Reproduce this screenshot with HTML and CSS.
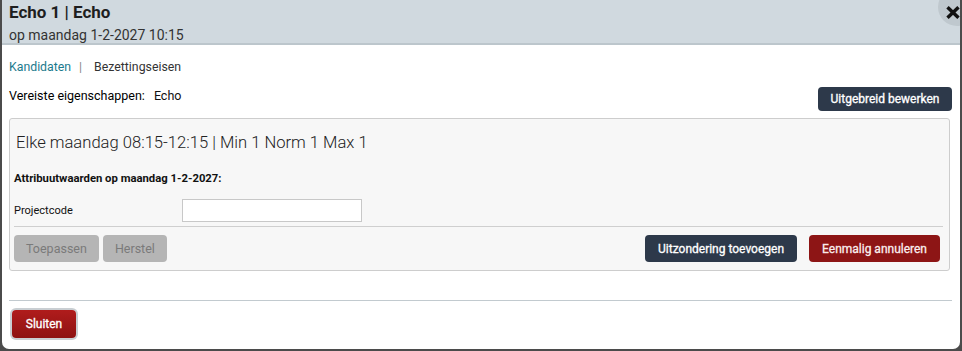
FILE: index.html
```html
<!DOCTYPE html>
<html>
<head>
<meta charset="utf-8">
<link rel="stylesheet" href="styles.css">
</head>
<body>
<div class="dialog">
  <div class="header">
    <div class="title">Echo 1 | Echo</div>
    <div class="subtitle">op maandag 1-2-2027 10:15</div>
    <button class="close" aria-label="Sluiten">
      <svg width="14" height="13" viewBox="0 0 14 13"><path d="M1.5 1.2 L12.5 11.8 M12.5 1.2 L1.5 11.8" stroke="#111" stroke-width="3.4" stroke-linecap="butt"/></svg>
    </button>
  </div>
  <div class="body">
    <div class="tabs">
      <a class="tab-link">Kandidaten</a>
      <span class="sep">|</span>
      <span class="tab-active">Bezettingseisen</span>
    </div>
    <div class="props-row">
      <div class="props"><span class="props-label">Vereiste eigenschappen:</span><span class="props-val">Echo</span></div>
      <button class="btn btn-dark btn-edit">Uitgebreid bewerken</button>
    </div>
    <div class="panel">
      <div class="panel-title">Elke maandag 08:15-12:15 | Min 1 Norm 1 Max 1</div>
      <div class="attr-head">Attribuutwaarden op maandag 1-2-2027:</div>
      <div class="field">
        <label class="field-label">Projectcode</label>
        <input class="field-input" type="text">
      </div>
      <div class="panel-actions">
        <div class="group">
          <button class="btn btn-disabled">Toepassen</button>
          <button class="btn btn-disabled">Herstel</button>
        </div>
        <div class="group group-right">
          <button class="btn btn-dark">Uitzondering toevoegen</button>
          <button class="btn btn-red">Eenmalig annuleren</button>
        </div>
      </div>
    </div>
  </div>
  <div class="footer">
    <button class="btn btn-close">Sluiten</button>
  </div>
</div>
</body>
</html>
```
FILE: styles.css
```css
html, body {
  margin: 0;
  padding: 0;
}
body {
  background: #4b4b4b;
  font-family: Roboto, "Liberation Sans", Arial, sans-serif;
  color: #222;
  width: 962px;
  height: 351px;
  overflow: hidden;
}
.dialog {
  margin-left: 2px;
  width: 958px;
  height: 349px;
  background: #fff;
  border-radius: 0 0 7px 7px;
  position: relative;
  overflow: hidden;
}
.header {
  height: 43px;
  background: #d0d9df;
  border-bottom: 2px solid #bcc6cc;
  padding: 0 0 0 7px;
  position: relative;
}
.title {
  font-size: 17px;
  font-weight: 700;
  color: #1e1e1e;
  line-height: 20px;
  padding-top: 2px;
}
.subtitle {
  font-size: 14px;
  color: #333;
  line-height: 18px;
  padding-top: 4px;
}
.close {
  position: absolute;
  right: -16px;
  top: -12px;
  width: 38px;
  height: 38px;
  border-radius: 50%;
  border: none;
  background: #bfc8ce;
  padding: 0;
  display: flex;
  align-items: flex-start;
  justify-content: flex-start;
}
.close svg {
  margin: 18px 0 0 8px;
}
.body {
  padding: 0 6px 0 7px;
}
.tabs {
  font-size: 12.3px;
  padding-top: 14px;
  line-height: 16px;
  display: flex;
  align-items: center;
}
.tab-link {
  color: #1b7a8d;
}
.sep {
  color: #888;
  margin: 0 12px 0 8px;
}
.tab-active {
  color: #333;
}
.props-row {
  display: flex;
  justify-content: space-between;
  align-items: flex-start;
  margin-top: 13px;
}
.props {
  font-size: 12.5px;
  color: #111;
  line-height: 16px;
}
.props-label {
  color: #000;
}
.props-val {
  margin-left: 9px;
}
.btn {
  font-family: Roboto, "Liberation Sans", Arial, sans-serif;
  font-size: 12px;
  border: none;
  border-radius: 4px;
  color: #fff;
  padding: 0 13px;
  height: 25px;
  cursor: pointer;
  font-weight: 400;
  -webkit-text-stroke: 0.3px #fff;
}
.btn-dark {
  background: #2d394a;
}
.btn-edit {
  margin-top: -1px;
  margin-right: 2px;
  height: 24px;
  width: 134px;
  padding: 0;
}
.btn-red {
  background: #8d1515;
  -webkit-text-stroke: 0.3px #f4dede;
}
.btn-disabled {
  background: #b5b5b5;
  color: #7a7a7a;
  font-size: 12.5px;
  height: 27px;
  padding: 0 12px;
  -webkit-text-stroke: 0;
}
.panel {
  margin-top: 7px;
  width: 941px;
  box-sizing: border-box;
  background: #f7f7f7;
  border: 1px solid #cdcdcd;
  border-radius: 3px;
  padding: 0 6px 0 4px;
  height: 153px;
}
.panel-title {
  font-size: 16.6px;
  font-weight: 300;
  color: #222;
  margin-top: 14px;
  padding-left: 2px;
  line-height: 20px;
}
.attr-head {
  font-size: 11.3px;
  font-weight: 700;
  color: #111;
  margin-top: 19px;
  line-height: 14px;
}
.field {
  display: flex;
  align-items: center;
  margin-top: 13px;
  padding-bottom: 4px;
  border-bottom: 1px solid #cfcfcf;
}
.field-label {
  font-size: 11px;
  color: #111;
  width: 168px;
}
.field-input {
  width: 180px;
  height: 23px;
  box-sizing: border-box;
  border: 1px solid #c8c8c8;
  background: #fff;
  margin: 0;
}
.panel-actions {
  display: flex;
  justify-content: space-between;
  margin-top: 8px;
}
.group {
  display: flex;
  gap: 4px;
}
.group-right {
  gap: 12px;
  margin-right: 3px;
}
.group-right .btn {
  height: 27px;
}
.footer {
  margin: 29px 8px 0 7px;
  border-top: 1px solid #c2cacf;
  padding-top: 9px;
}
.btn-close {
  background: linear-gradient(#b01c1c, #8e1212);
  height: 28px;
  width: 64px;
  padding: 0;
  margin-left: 3px;
  box-shadow: 0 0 0 2px #c9ced2;
}
```
